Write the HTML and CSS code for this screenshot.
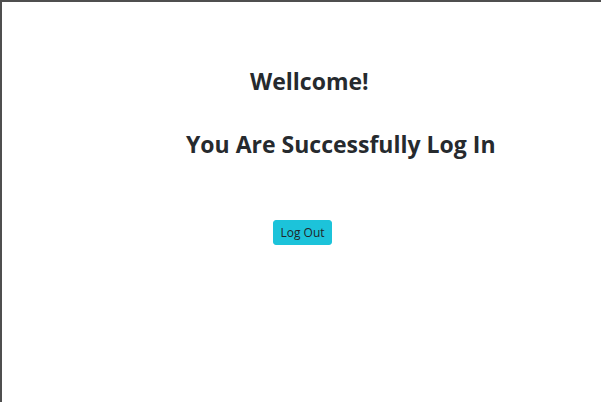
FILE: index.html
```html
<!DOCTYPE html>
<html>
<head>
<meta charset="utf-8">
<link rel="stylesheet" href="styles.css">
</head>
<body>
<div class="frame">
  <h1 class="title welcome">Wellcome!</h1>
  <h1 class="title success">You Are Successfully Log In</h1>
  <div class="actions">
    <button class="btn-logout" type="button">Log Out</button>
  </div>
</div>
</body>
</html>
```
FILE: styles.css
```css
html, body {
  margin: 0;
  padding: 0;
  background: #fff;
}
.frame {
  box-sizing: border-box;
  width: 601px;
  height: 402px;
  border-top: 2px solid #4f4f4f;
  border-left: 2px solid #4f4f4f;
  font-family: "Open Sans", "Noto Sans", sans-serif;
  color: #262a2e;
  padding-top: 62px;
}
.title {
  margin: 0;
  font-size: 23px;
  font-weight: 700;
  line-height: 34px;
}
.welcome {
  padding-left: 248px;
}
.success {
  padding-left: 184px;
  margin-top: 29px;
}
.actions {
  padding-left: 271px;
  margin-top: 59px;
}
.btn-logout {
  display: block;
  box-sizing: border-box;
  font-family: "Open Sans", "Noto Sans", sans-serif;
  font-size: 12px;
  white-space: nowrap;
  color: #212529;
  background: #1cc3da;
  border: 1px solid #1cc3da;
  border-radius: 3px;
  padding: 0;
  height: 25px;
  width: 59px;
}
```
